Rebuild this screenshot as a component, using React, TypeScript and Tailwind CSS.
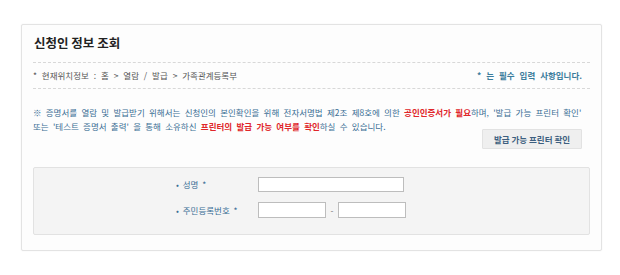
const font = { fontFamily: '"Noto Sans CJK KR", "Noto Sans", sans-serif' };

function Dots() {
  return <div className="h-0 border-t border-dashed border-[#d8d8d8]" />;
}

export default function App() {
  return (
    <div className="h-[275px] w-[620px] bg-white pt-[24px] pl-[21px]" style={font}>
      <div className="h-[227px] w-[581px] rounded-[2px] border border-[#e3e3e3] bg-[#fdfdfd] px-[11px] shadow-[0_0_2px_rgba(0,0,0,0.06)]">
        {/* 제목 */}
        <h1 className="pt-[10px] pb-[11px] pl-[1px] text-[12.5px] font-bold leading-[16px] text-[#222]">
          신청인 정보 조회
        </h1>
        <Dots />

        {/* 위치 */}
        <div className="flex h-[25px] items-center justify-between pr-[8px] text-[8.5px] text-[#555] [word-spacing:3px]">
          <span>* 현재위치정보 : 홈 &gt; 열람 / 발급 &gt; 가족관계등록부</span>
          <span className="font-bold text-[#3b7c9c]">* 는 필수 입력 사항입니다.</span>
        </div>
        <Dots />

        {/* 안내 */}
        <div className="pt-[16px] text-[8.5px] leading-[14px] text-[#3a6e94] [word-spacing:2.4px]">
          <p>
            ※ 증명서를 열람 및 발급받기 위해서는 신청인의 본인확인을 위해 전자서명법 제2조 제8호에 의한{" "}
            <b className="text-[#e0262a]">공인인증서가 필요</b>하며, '발급 가능 프린터 확인'
          </p>
          <p>
            또는 '테스트 증명서 출력' 을 통해 소유하신{" "}
            <b className="text-[#e0262a]">프린터의 발급 가능 여부를 확인</b>하실 수 있습니다.
          </p>
        </div>
        <div className="-mt-[4px] flex justify-end pr-[8px]">
          <button className="h-[20px] w-[100px] rounded-[1px] border border-[#e2e2e2] bg-[#efefef] text-[8.5px] font-bold text-[#3d5f80]">
            발급 가능 프린터 확인
          </button>
        </div>

        {/* 입력 */}
        <div className="mt-[18px] flex h-[68px] flex-col gap-[10px] rounded-[2px] border border-[#e2e2e2] bg-[#f4f4f4] pt-[9px] pl-[142px] text-[8.5px] text-[#3a6e94] [word-spacing:2px]">
          <div className="flex items-center">
            <span className="w-[82px]">• 성명 *</span>
            <input className="h-[15px] w-[146px] border border-[#bdbdbd] bg-white" />
          </div>
          <div className="flex items-center">
            <span className="w-[82px]">• 주민등록번호 *</span>
            <input className="h-[16px] w-[68px] border border-[#bdbdbd] bg-white" />
            <span className="w-[12px] text-center text-[#777]">-</span>
            <input className="h-[16px] w-[68px] border border-[#bdbdbd] bg-white" />
          </div>
        </div>
      </div>
    </div>
  );
}
